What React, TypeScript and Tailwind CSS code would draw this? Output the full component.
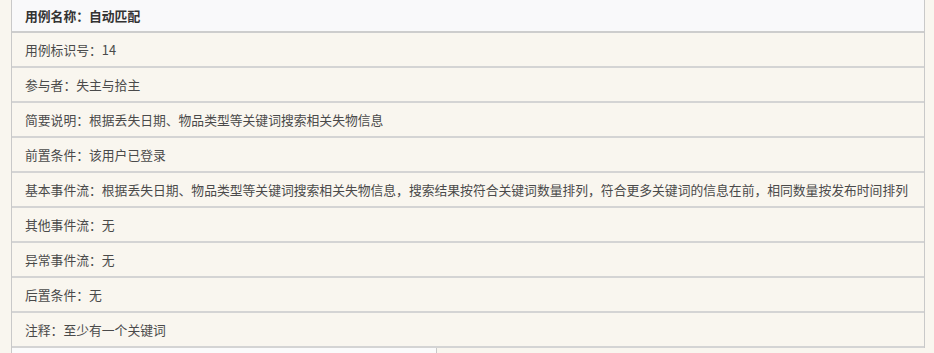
import React from "react";

const rows = [
  "用例标识号：14",
  "参与者：失主与拾主",
  "简要说明：根据丢失日期、物品类型等关键词搜索相关失物信息",
  "前置条件：该用户已登录",
  "基本事件流：根据丢失日期、物品类型等关键词搜索相关失物信息，搜索结果按符合关键词数量排列，符合更多关键词的信息在前，相同数量按发布时间排列",
  "其他事件流：无",
  "异常事件流：无",
  "后置条件：无",
  "注释：至少有一个关键词",
];

export default function App() {
  return (
    <div
      className="w-[934px] h-[353px] overflow-hidden bg-[#f9f6ef] pl-[11px] pr-[9px]"
      style={{ fontFamily: '"Microsoft YaHei", "Noto Sans CJK SC", "Noto Sans", sans-serif' }}
    >
      <div className="border-l border-r border-[#c9c9c9]">
        <div className="h-[33px] flex items-center pl-[13px] bg-[#f9f9fa] border-b-2 border-[#cdcdcd] text-[12.8px] font-bold text-[#333]">
          用例名称：自动匹配
        </div>
        {rows.map((r, i) => (
          <div
            key={i}
            className="h-[35px] flex items-center pl-[13px] border-b-2 border-[#d4d4d4] text-[12.8px] text-[#4a4a4a] whitespace-nowrap"
          >
            {r}
          </div>
        ))}
      </div>
      <div className="w-[426px] h-[10px] bg-[#fbfbfb] border-l border-r border-[#c9c9c9]" />
    </div>
  );
}
